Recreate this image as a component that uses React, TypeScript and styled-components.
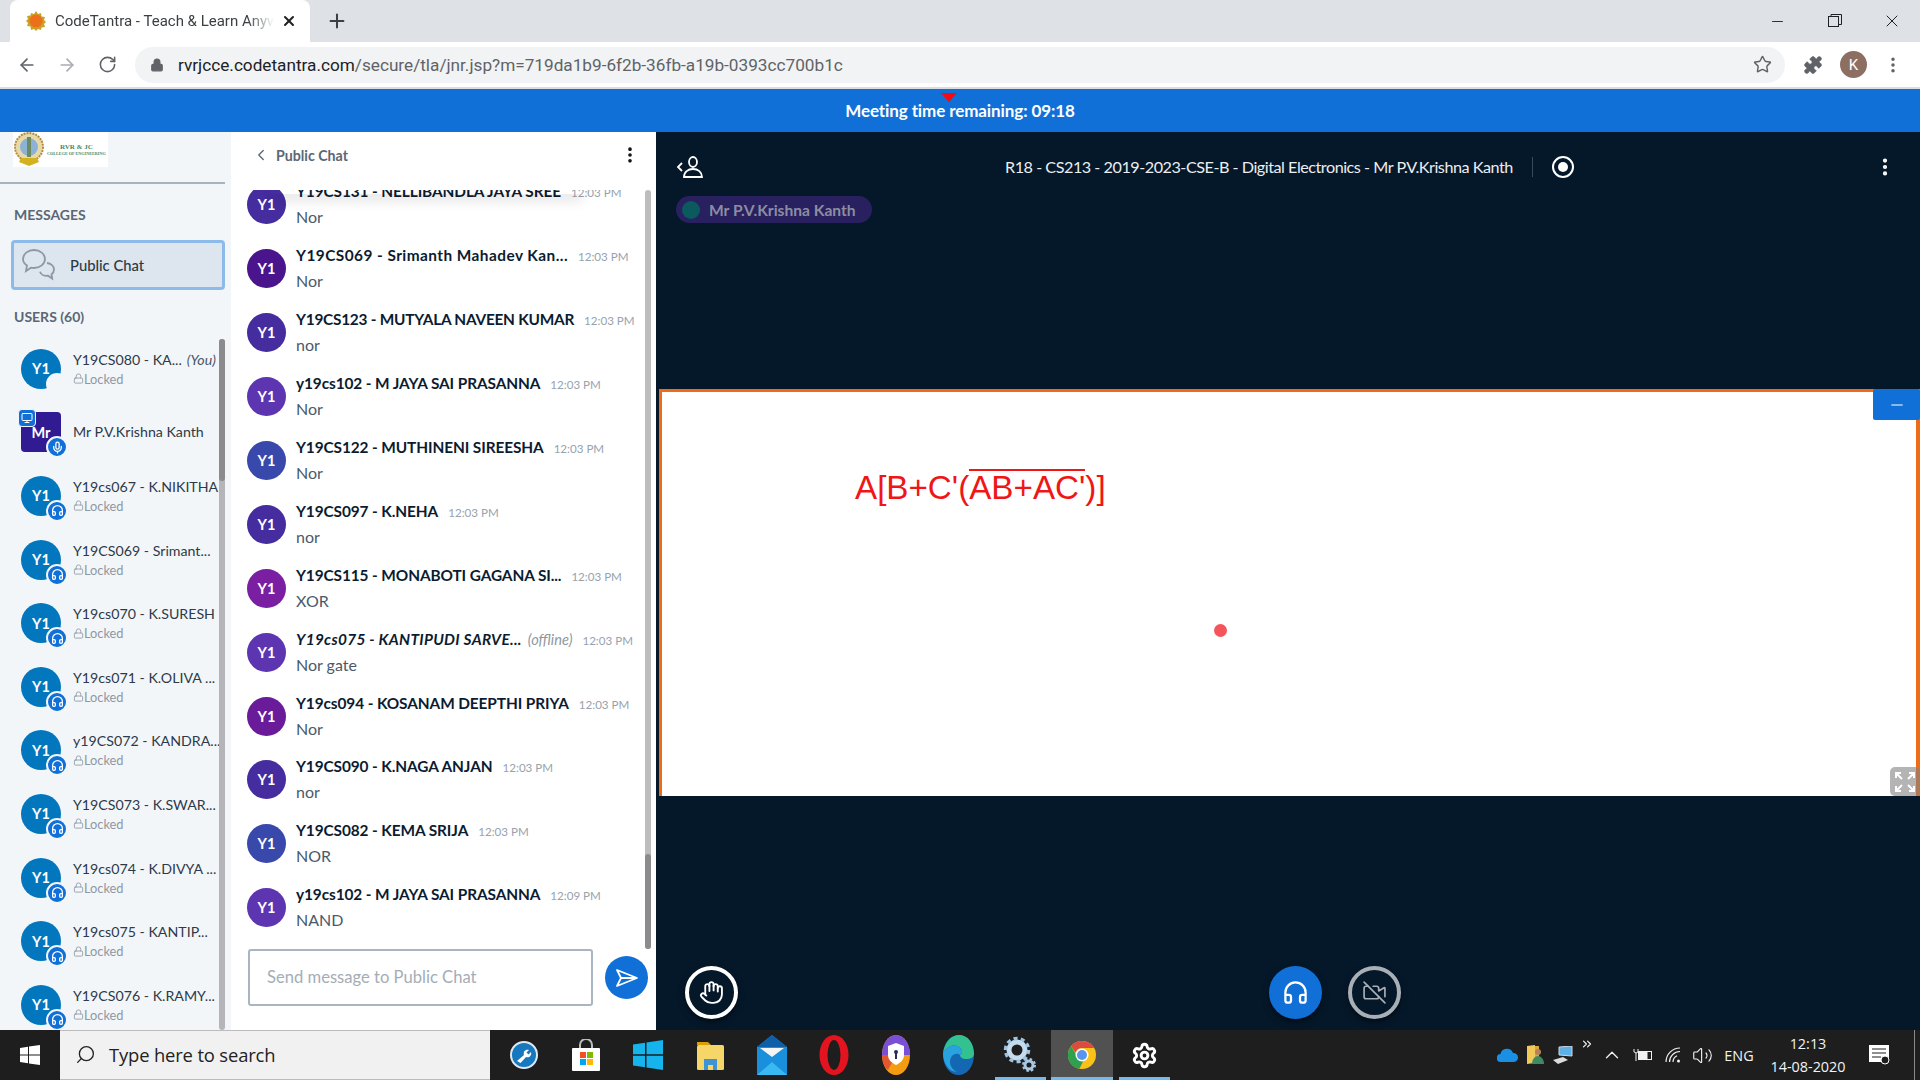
import React from "react";
import styled, { createGlobalStyle } from "styled-components";
import {
  ArrowLeft,
  ArrowRight,
  RotateCw,
  Lock,
  Star,
  Puzzle,
  Plus,
  X,
  Minus,
  ChevronLeft,
  ChevronUp,
  ChevronsRight,
  MoreVertical,
  Headphones,
  Mic,
  Monitor,
  Hand,
  VideoOff,
  Search,
  Volume2,
  Settings,
} from "lucide-react";

const SANS = `Lato, "Open Sans", sans-serif`;

const GlobalStyle = createGlobalStyle`
  html, body { margin: 0; padding: 0; height: 100%; overflow: hidden; }
  * { box-sizing: border-box; }
  body { font-family: ${SANS}; }
`;

const Page = styled.div`
  width: 1920px;
  height: 1080px;
  display: flex;
  flex-direction: column;
  overflow: hidden;
`;

/* browser chrome */
const TabStrip = styled.div`
  height: 42px;
  background: #dee1e6;
  display: flex;
  align-items: flex-end;
  padding-left: 10px;
  flex: none;
`;
const Tab = styled.div`
  width: 300px;
  height: 42px;
  background: #fff;
  border-radius: 8px 8px 0 0;
  display: flex;
  align-items: center;
  padding-left: 15px;
  position: relative;
`;
const TabTitle = styled.div`
  margin-left: 8px;
  width: 219px;
  font: 400 15px Roboto, sans-serif;
  color: #3c4043;
  white-space: nowrap;
  overflow: hidden;
  -webkit-mask-image: linear-gradient(90deg, #000 88%, transparent);
  mask-image: linear-gradient(90deg, #000 88%, transparent);
`;
const TabClose = styled.div`
  margin-left: 7px;
  display: flex;
  color: #202124;
`;
const NewTab = styled.div`
  height: 42px;
  margin-left: 16px;
  display: flex;
  align-items: center;
  color: #3c4043;
`;
const WindowButtons = styled.div`
  margin-left: auto;
  height: 42px;
  display: flex;
`;
const WindowButton = styled.div`
  width: 57px;
  height: 42px;
  display: flex;
  align-items: center;
  justify-content: center;
  color: #202124;
`;
const Toolbar = styled.div`
  height: 47px;
  flex: none;
  background: #fff;
  border-bottom: 2px solid #dadce0;
  display: flex;
  align-items: center;
`;
const NavButton = styled.div<{ $w: number; $dim?: boolean }>`
  width: ${(p) => p.$w}px;
  display: flex;
  justify-content: center;
  color: ${(p) => (p.$dim ? "#a9acb0" : "#5f6368")};
`;
const UrlPill = styled.div`
  width: 1650px;
  height: 36px;
  background: #f1f3f4;
  border-radius: 18px;
  display: flex;
  align-items: center;
  padding: 0 13px 0 15px;
  color: #5f6368;
`;
const UrlText = styled.div`
  margin-left: 14px;
  font: 400 17.2px Roboto, sans-serif;
  color: #5f6368;
  white-space: nowrap;
  flex: 1;
  b {
    font-weight: 400;
    color: #202124;
  }
`;
const ProfileDot = styled.div`
  width: 27px;
  height: 27px;
  border-radius: 50%;
  background: #8d6e63;
  color: #fff;
  font: 400 15px Roboto, sans-serif;
  display: flex;
  align-items: center;
  justify-content: center;
`;

/* meeting banner */
const Banner = styled.div`
  height: 43px;
  flex: none;
  background: #1070d8;
  color: #fff;
  font: 700 17px ${SANS};
  display: flex;
  align-items: center;
  justify-content: center;
  position: relative;
  letter-spacing: -0.1px;
  padding-bottom: 1px;
`;
const RedMark = styled.div`
  position: absolute;
  left: 941px;
  top: 4px;
  width: 0;
  height: 0;
  border-left: 8px solid transparent;
  border-right: 8px solid transparent;
  border-top: 9px solid #f40b12;
`;

const Main = styled.div`
  height: 898px;
  flex: none;
  display: grid;
  grid-template-columns: 231px 425px 1fr;
  overflow: hidden;
`;

/* left column */
const Sidebar = styled.aside`
  background: #f3f6f9;
  display: flex;
  flex-direction: column;
  overflow: hidden;
`;
const LogoBox = styled.div`
  margin-left: 13px;
  width: 95px;
  height: 35px;
  background: #fff;
  display: flex;
  align-items: center;
  flex: none;
  overflow: hidden;
`;
const LogoText = styled.div`
  font: 700 7px/8px "Liberation Serif", serif;
  color: #3d8a63;
  text-align: center;
  white-space: nowrap;
  margin-left: 2px;
  small {
    display: block;
    font-size: 4.2px;
    line-height: 6px;
  }
`;
const Divider = styled.div`
  height: 2px;
  width: 225px;
  margin-top: 15px;
  background: #a8b3bd;
  flex: none;
`;
const SectionLabel = styled.div<{ $top: number }>`
  margin: ${(p) => p.$top}px 0 0 14px;
  font: 700 14px ${SANS};
  color: #5a6775;
  height: 18px;
  line-height: 18px;
  flex: none;
`;
const PublicBox = styled.div`
  margin: 16px 0 0 11px;
  width: 214px;
  height: 50px;
  flex: none;
  background: #dde5ee;
  border: 3px solid #8dbbe9;
  border-radius: 4px;
  display: flex;
  align-items: center;
  padding-left: 7px;
  font: 500 14.8px ${SANS};
  color: #2b3947;
`;
const PublicLabel = styled.span`
  margin-left: 13px;
`;
const UserArea = styled.div`
  margin-top: 13px;
  flex: 1;
  display: flex;
  width: 225px;
  min-height: 0;
`;
const UserList = styled.div`
  flex: 1;
  min-width: 0;
  margin-top: -2px;
`;
const Scrollbar = styled.div<{ $thumbTop: number; $thumbHeight: number; $track: string }>`
  width: 6px;
  flex: none;
  border-radius: 3px;
  background: ${(p) => p.$track};
  position: relative;
  &::after {
    content: "";
    position: absolute;
    left: 0;
    right: 0;
    top: ${(p) => p.$thumbTop}px;
    height: ${(p) => p.$thumbHeight}px;
    background: #8b8b8d;
    border-radius: 3px;
  }
`;
const UserRow = styled.div`
  height: 63.6px;
  display: flex;
  align-items: center;
  padding-left: 21px;
`;
const UserAvatar = styled.div<{ $square?: boolean }>`
  width: 40px;
  height: 40px;
  flex: none;
  border-radius: ${(p) => (p.$square ? "4px" : "50%")};
  background: ${(p) => (p.$square ? "#311b92" : "#0277bd")};
  color: #fff;
  font: 700 14.5px ${SANS};
  display: flex;
  align-items: center;
  justify-content: center;
  position: relative;
`;
const Badge = styled.div<{ $cut?: boolean }>`
  position: absolute;
  right: -7px;
  bottom: -6px;
  width: 22px;
  height: 22px;
  border-radius: 50%;
  background: ${(p) => (p.$cut ? "#f3f6f9" : "#1070d8")};
  border: 2px solid #f3f6f9;
  color: #fff;
  display: flex;
  align-items: center;
  justify-content: center;
`;
const PresenterTag = styled.div`
  position: absolute;
  left: -3px;
  top: -3px;
  width: 18px;
  height: 18px;
  border-radius: 4px;
  background: #1070d8;
  border: 1px solid #f3f6f9;
  color: #fff;
  display: flex;
  align-items: center;
  justify-content: center;
`;
const UserText = styled.div`
  margin-left: 12px;
  min-width: 0;
  flex: 1;
`;
const UserName = styled.div`
  font: 400 14.2px/20px ${SANS};
  color: #2d3a49;
  white-space: nowrap;
  display: flex;
  i {
    margin-left: 5px;
    color: #4a5766;
  }
`;
const LockedLine = styled.div`
  font: 400 12.8px/18px ${SANS};
  color: #8e98a3;
  display: flex;
  align-items: center;
`;

/* chat column */
const ChatPanel = styled.section`
  background: #fff;
  display: flex;
  flex-direction: column;
  min-height: 0;
`;
const ChatHeader = styled.div`
  height: 58px;
  flex: none;
  display: flex;
  align-items: center;
  padding: 0 16px 12px 21px;
  color: #5a6775;
  font: 700 14.2px ${SANS};
`;
const ChatHeaderTitle = styled.span`
  margin-left: 6px;
  flex: 1;
`;
const ChatBody = styled.div`
  height: 759px;
  flex: none;
  display: flex;
  padding-right: 5px;
  position: relative;
  overflow: hidden;
`;
const TopShade = styled.div`
  position: absolute;
  left: 40px;
  top: -6px;
  right: 70px;
  height: 10px;
  background: transparent;
  box-shadow: 0 6px 14px -3px rgba(0, 0, 0, 0.3);
  z-index: 1;
`;
const MessageList = styled.div`
  flex: 1;
  min-width: 0;
  margin-top: -17px;
`;
const MessageRow = styled.div`
  height: 63.9px;
  display: flex;
  align-items: center;
  padding-left: 16px;
`;
const MessageAvatar = styled.div<{ $bg: string }>`
  width: 39px;
  height: 39px;
  flex: none;
  border-radius: 50%;
  background: ${(p) => p.$bg};
  color: #fff;
  font: 700 14.5px ${SANS};
  display: flex;
  align-items: center;
  justify-content: center;
`;
const MessageText = styled.div`
  margin-left: 10px;
  min-width: 0;
`;
const NameLine = styled.div`
  display: flex;
  align-items: baseline;
  white-space: nowrap;
  height: 25px;
  line-height: 25px;
`;
const SenderName = styled.span<{ $offline?: boolean; $track?: number }>`
  font: ${(p) => (p.$offline ? "italic" : "normal")} 700 15.4px/25px ${SANS};
  letter-spacing: ${(p) => p.$track ?? -0.1}px;
  color: #0c1c30;
`;
const OfflineTag = styled.span`
  margin-left: 6px;
  font: italic 400 14.6px/25px ${SANS};
  color: #8e98a3;
`;
const TimeStamp = styled.span`
  margin-left: 10px;
  font: 400 11.6px/25px ${SANS};
  color: #97a2ad;
`;
const MessageBody = styled.div`
  font: 400 16px/26px ${SANS};
  color: #4a5a6b;
`;
const ChatFooter = styled.div`
  flex: 1;
  display: flex;
  align-items: flex-start;
  padding-left: 17px;
`;
const ChatInput = styled.div`
  width: 345px;
  height: 57px;
  border: 2px solid #a9b5c1;
  border-radius: 3px;
  display: flex;
  align-items: center;
  padding: 0 0 2px 17px;
  font: 400 16.6px ${SANS};
  color: #a4adb7;
`;
const SendButton = styled.div`
  width: 43px;
  height: 43px;
  margin: 7px 0 0 12px;
  border-radius: 50%;
  background: #1070d8;
  display: flex;
  align-items: center;
  justify-content: center;
`;

/* presentation column */
const Stage = styled.section`
  background: #05182a;
  display: flex;
  flex-direction: column;
  min-height: 0;
  color: #fff;
`;
const StageHeader = styled.div`
  height: 22px;
  margin-top: 24px;
  flex: none;
  display: flex;
  align-items: center;
  padding-left: 20px;
`;
const MeetingTitle = styled.div`
  margin-left: 301px;
  padding-bottom: 2px;
  font: 400 16.2px ${SANS};
  color: #eceef0;
  white-space: nowrap;
  letter-spacing: -0.48px;
`;
const TitleSep = styled.div`
  width: 1px;
  height: 20px;
  margin-left: 19px;
  background: #39485a;
`;
const RecordIcon = styled.div`
  width: 22px;
  height: 22px;
  margin-left: 19px;
  border-radius: 50%;
  border: 2px solid #fff;
  display: flex;
  align-items: center;
  justify-content: center;
  &::after {
    content: "";
    width: 10px;
    height: 10px;
    border-radius: 50%;
    background: #fff;
  }
`;
const StageMenu = styled.div`
  margin-left: 300px;
  display: flex;
  color: #fff;
`;
const SpeakerChip = styled.div`
  align-self: flex-start;
  margin: 18px 0 0 20px;
  height: 27px;
  width: 196px;
  border-radius: 14px;
  background: #28205f;
  display: flex;
  align-items: center;
  padding-left: 6px;
  font: 700 15.6px ${SANS};
  color: #8d8da1;
  flex: none;
`;
const SpeakerDot = styled.div`
  width: 18px;
  height: 18px;
  border-radius: 50%;
  background: #0b5a5e;
  margin-right: 9px;
`;
const StageSpacer = styled.div`
  flex: 1;
`;
const Board = styled.div`
  height: 407px;
  flex: none;
  margin-left: 3px;
  background: #fff;
  border: solid #ee6c18;
  border-width: 3px 4px 0 3px;
  position: relative;
`;
const BoardFormula = styled.div`
  position: absolute;
  left: 193px;
  top: 76px;
  font: 400 33.2px/40px "Liberation Sans", sans-serif;
  color: #f01616;
  white-space: nowrap;
`;
const Overlined = styled.span`
  position: relative;
  &::before {
    content: "";
    position: absolute;
    left: 0;
    right: 0;
    top: 0;
    height: 2px;
    background: #f01616;
  }
`;
const Pointer = styled.div`
  position: absolute;
  left: 552px;
  top: 232px;
  width: 13px;
  height: 13px;
  border-radius: 50%;
  background: #f4555a;
`;
const MinimizeTab = styled.div`
  position: absolute;
  right: -4px;
  top: -3px;
  width: 47px;
  height: 31px;
  background: #1070d8;
  border-radius: 2px;
  display: flex;
  align-items: center;
  justify-content: center;
  color: #fff;
`;
const FullscreenTab = styled.div`
  position: absolute;
  right: -4px;
  bottom: 0;
  width: 30px;
  height: 29px;
  background: rgba(130, 130, 130, 0.6);
  border-radius: 5px;
  display: flex;
  align-items: center;
  justify-content: center;
`;
const Dock = styled.div`
  height: 234px;
  flex: none;
  display: flex;
  align-items: flex-start;
  padding: 170px 0 0 29px;
`;
const DockButton = styled.div<{ $kind: "hand" | "audio" | "video" }>`
  width: 53px;
  height: 53px;
  border-radius: 50%;
  display: flex;
  align-items: center;
  justify-content: center;
  box-shadow: 0 3px 6px rgba(0, 0, 0, 0.5);
  color: ${(p) => (p.$kind === "video" ? "#a9afb6" : "#fff")};
  background: ${(p) => (p.$kind === "audio" ? "#1070d8" : "transparent")};
  border: ${(p) => (p.$kind === "audio" ? "none" : `4px solid ${p.$kind === "video" ? "#a9afb6" : "#fff"}`)};
  margin-left: ${(p) => (p.$kind === "audio" ? "531px" : p.$kind === "video" ? "26px" : "0")};
`;

/* windows taskbar */
const Taskbar = styled.footer`
  height: 50px;
  flex: none;
  background: #1e1e1e;
  display: flex;
  align-items: stretch;
`;
const StartSlot = styled.div`
  width: 60px;
  display: flex;
  align-items: center;
  justify-content: center;
`;
const SearchBox = styled.div`
  width: 430px;
  background: #f1f1f1;
  border: 1px solid #bcbcbc;
  border-width: 1px 0;
  display: flex;
  align-items: center;
  padding: 0 0 2px 15px;
  color: #222;
  font: 400 18.4px "Open Sans", sans-serif;
  margin-right: 3px;
  svg {
    transform: scaleX(-1);
  }
`;
const SearchText = styled.span`
  margin-left: 13px;
  letter-spacing: -0.15px;
`;
const AppSlot = styled.div<{ $active?: boolean; $open?: boolean }>`
  width: 62px;
  display: flex;
  align-items: center;
  justify-content: center;
  position: relative;
  background: ${(p) => (p.$active ? "#515151" : "transparent")};
  &::after {
    content: "";
    display: ${(p) => (p.$open || p.$active ? "block" : "none")};
    position: absolute;
    bottom: 0;
    left: ${(p) => (p.$active ? "0" : "6px")};
    right: ${(p) => (p.$active ? "0" : "5px")};
    height: 3px;
    background: #76b9ed;
  }
`;
const TaskbarSpacer = styled.div`
  flex: 1;
`;
const TraySlot = styled.div<{ $w: number; $raised?: boolean }>`
  width: ${(p) => p.$w}px;
  display: flex;
  align-items: center;
  justify-content: center;
  color: #f2f2f2;
  padding-bottom: ${(p) => (p.$raised ? "22px" : "0")};
`;
const TrayLang = styled(TraySlot)`
  font: 400 14.4px "Open Sans", sans-serif;
`;
const Clock = styled(TraySlot)`
  flex-direction: column;
  font: 400 14.4px/23px "Open Sans", sans-serif;
  white-space: nowrap;
`;
const ShowDesktop = styled.div`
  width: 6px;
  margin-left: 10px;
  border-left: 1px solid #8a8a8a;
`;

type Message = { name: string; time: string; text: string; bg: string; offline?: boolean; track?: number };

const MESSAGES: Message[] = [
  { name: "Y19CS131 - NELLIBANDLA JAYA SREE", time: "12:03 PM", text: "Nor", bg: "#452c9f" },
  { name: "Y19CS069 - Srimanth Mahadev Kan...", time: "12:03 PM", text: "Nor", bg: "#4a148c", track: 0.45 },
  { name: "Y19CS123 - MUTYALA NAVEEN KUMAR", time: "12:03 PM", text: "nor", bg: "#452c9f", track: -0.25 },
  { name: "y19cs102 - M JAYA SAI PRASANNA", time: "12:03 PM", text: "Nor", bg: "#5e35b1" },
  { name: "Y19CS122 - MUTHINENI SIREESHA", time: "12:03 PM", text: "Nor", bg: "#3949ab" },
  { name: "Y19CS097 - K.NEHA", time: "12:03 PM", text: "nor", bg: "#452c9f" },
  { name: "Y19CS115 - MONABOTI GAGANA SI...", time: "12:03 PM", text: "XOR", bg: "#7b1fa2" },
  { name: "Y19cs075 - KANTIPUDI SARVE...", time: "12:03 PM", text: "Nor gate", bg: "#5e35b1", offline: true, track: 0.3 },
  { name: "Y19cs094 - KOSANAM DEEPTHI PRIYA", time: "12:03 PM", text: "Nor", bg: "#6a1b9a" },
  { name: "Y19CS090 - K.NAGA ANJAN", time: "12:03 PM", text: "nor", bg: "#452c9f" },
  { name: "Y19CS082 - KEMA SRIJA", time: "12:03 PM", text: "NOR", bg: "#3949ab" },
  { name: "y19cs102 - M JAYA SAI PRASANNA", time: "12:09 PM", text: "NAND", bg: "#5e35b1" },
];

const USERS = [
  "Y19cs067 - K.NIKITHA",
  "Y19CS069 - Srimant...",
  "Y19cs070 - K.SURESH",
  "Y19cs071 - K.OLIVA ...",
  "y19CS072 - KANDRA...",
  "Y19CS073 - K.SWAR...",
  "Y19cs074 - K.DIVYA ...",
  "Y19cs075 - KANTIP...",
  "Y19CS076 - K.RAMY...",
];

const Locked = () => (
  <LockedLine>
    <Lock size={11} strokeWidth={1.8} />
    Locked
  </LockedLine>
);

const Sun = () => (
  <svg width="22" height="22" viewBox="0 0 22 22">
    <path d="M11 1l2 3 3-1 .5 3.500 3.500.5-1 3 2 2-2 2 1 3-3.500.5L16 20l-3-1-2 2-2-2-3 1-.5-3.500L2 16l1-3-2-2 2-2-1-3 3.500-.5L6 3l3 1z" fill="#c9a227" />
    <circle cx="11" cy="11" r="6.500" fill="#ee6f1a" />
  </svg>
);

const Crest = () => (
  <svg width="32" height="35" viewBox="0 0 32 35">
    <circle cx="16" cy="15" r="14" fill="#e8d9a8" stroke="#b58b3c" strokeWidth="2" strokeDasharray="2 1" />
    <circle cx="16" cy="15" r="9" fill="#8cb3d6" />
    <rect x="14" y="5" width="4" height="20" fill="#6d8a62" />
    <path d="M6 30l10 4 10-4-2-4H8z" fill="#d4b21f" />
  </svg>
);

const ChatBubbles = () => (
  <svg width="36" height="34" viewBox="0 0 36 34" fill="none" stroke="#8b98a6" strokeWidth="1.8">
    <path d="M13 2c6 0 11 4 11 9s-5 9-11 9c-1 0-2 0-3-.3L5 23l1-5.500C3.500 16 2 13.700 2 11c0-5 5-9 11-9z" />
    <path d="M26 15c4 .5 7 3 7 6.500 0 2-1 3.600-2.500 4.700l.7 4.300-4.200-2.800c-3.500.5-7-1-8-4" />
  </svg>
);

const SendGlyph = () => (
  <svg width="24" height="20" viewBox="0 0 24 20" fill="none" stroke="#fff" strokeWidth="1.800" strokeLinejoin="round">
    <path d="M2 2l20 8-20 8 4-8zM6 10h16" />
  </svg>
);

const PersonBack = () => (
  <svg width="28" height="24" viewBox="0 0 28 24" fill="none" stroke="#fff" strokeWidth="1.800">
    <path d="M6 8l-4 4 4 4" />
    <ellipse cx="17" cy="7" rx="4" ry="5" />
    <path d="M8 22c0-5 4-8 9-8s9 3 9 8z" />
  </svg>
);

const ExpandArrows = () => (
  <svg width="20" height="20" viewBox="0 0 20 20" fill="none" stroke="#fff" strokeWidth="2">
    <path d="M1 6V1h5M1 1l6 6M14 1h5v5M19 1l-6 6M1 14v5h5M1 19l6-6M14 19h5v-5M19 19l-6-6" />
  </svg>
);

const WinLogo = ({ size, color }: { size: number; color: string }) => (
  <svg width={size} height={size} viewBox="0 0 20 20" fill={color}>
    <path d="M0 3l8-1.200V9.500H0zM9 1.600L20 0v9.500H9zM0 10.500h8v7.700L0 17zM9 10.500h11V20L9 18.400z" />
  </svg>
);

const ChromeLogo = () => (
  <svg width="28" height="28" viewBox="0 0 28 28">
    <circle cx="14" cy="14" r="14" fill="#fbc116" />
    <path d="M14 0a14 14 0 0 1 12.100 7H14a7 7 0 0 0-6.500 4.400L3.200 5A14 14 0 0 1 14 0z" fill="#db4b3e" />
    <path d="M3.200 5l6 10.500a6 6 0 0 0 6.300 4.300L11.400 27.800A14 14 0 0 1 3.200 5z" fill="#2fa04f" />
    <circle cx="14" cy="14" r="6.500" fill="#fff" />
    <circle cx="14" cy="14" r="5" fill="#5a95ed" />
  </svg>
);

const ToolsLogo = () => (
  <svg width="28" height="28" viewBox="0 0 28 28">
    <circle cx="14" cy="14" r="13" fill="#1679bf" stroke="#dfe9f2" strokeWidth="2" />
    <path d="M7 20l7-6c-1-3 1-6 5-5l-2.500 2.500 2 2L21 11c1 4-2 6-5 5l-5.500 6z" fill="#fff" />
  </svg>
);

const StoreLogo = () => (
  <svg width="30" height="32" viewBox="0 0 30 32">
    <path d="M9 9V6a6 6 0 0 1 12 0v3" fill="none" stroke="#bdbdbd" strokeWidth="2" />
    <rect x="1" y="9" width="28" height="23" rx="1" fill="#fff" />
    <rect x="9" y="13" width="6" height="6" fill="#f25022" />
    <rect x="16" y="13" width="6" height="6" fill="#7fba00" />
    <rect x="9" y="20" width="6" height="6" fill="#00a4ef" />
    <rect x="16" y="20" width="6" height="6" fill="#ffb900" />
  </svg>
);

const FolderLogo = () => (
  <svg width="29" height="32" viewBox="0 0 29 32">
    <path d="M1 3h11l3 3H1z" fill="#d9a005" />
    <rect x="1" y="6" width="27" height="25" rx="1.500" fill="#f7d669" />
    <path d="M8 31V20h13v11h-4v-5h-5v5z" fill="#3d93d6" />
  </svg>
);

const MailLogo = () => (
  <svg width="30" height="40" viewBox="0 0 30 40">
    <path d="M15 0l15 12v28H0V12z" fill="#1a8fdc" />
    <path d="M15 0l15 12H0z" fill="#0c5fa8" />
    <path d="M3 13h24l-12 9z" fill="#f4f4f4" />
    <path d="M0 40l15-13 15 13z" fill="#39b8f2" />
  </svg>
);

const OperaLogo = () => (
  <svg width="30" height="40" viewBox="0 0 30 40">
    <ellipse cx="15" cy="20" rx="14.500" ry="20" fill="#e3141f" />
    <ellipse cx="15" cy="20" rx="6.500" ry="15" fill="#1e1e1e" />
  </svg>
);

const AvastLogo = () => (
  <svg width="28" height="40" viewBox="0 0 28 40">
    <ellipse cx="14" cy="20" rx="14" ry="20" fill="#f39c12" />
    <path d="M14 0c8 0 14 9 14 20H0C0 9 6 0 14 0z" fill="#7a4fd6" />
    <path d="M0 20c0 6 2 12 6 15l8-15z" fill="#e4572e" />
    <path d="M14 8l8 3v9c0 5-4 8-8 10-4-2-8-5-8-10v-9z" fill="#fff" />
    <circle cx="14" cy="17" r="2" fill="#2c2c54" />
    <rect x="13" y="18" width="2" height="6" fill="#2c2c54" />
  </svg>
);

const EdgeLogo = () => (
  <svg width="31" height="40" viewBox="0 0 31 40">
    <ellipse cx="15.500" cy="20" rx="15.500" ry="20" fill="#1468b3" />
    <path d="M0 18C2 6 9 0 16 0c9 0 15 8 15 19 0 3-3 5-8 5-4 0-6-2-6-4 2-1 3-3 1-6C14 8 4 10 0 18z" fill="#33c28f" />
    <path d="M0 18c4-8 14-10 18-4 2 3 1 5-1 6-3-3-10-1-10 7 0 4 3 8 7 10C6 37 0 28 0 18z" fill="#2ba2e0" />
  </svg>
);

const GearsLogo = () => (
  <svg width="34" height="38" viewBox="0 0 34 38" fill="none">
    <circle cx="14" cy="14" r="8" stroke="#c4dcee" strokeWidth="5" />
    <circle cx="14" cy="14" r="11.500" stroke="#9fc4e0" strokeWidth="3.500" strokeDasharray="4 3.200" />
    <circle cx="26" cy="29" r="4" stroke="#a9c9e2" strokeWidth="3" />
    <circle cx="26" cy="29" r="6" stroke="#a9c9e2" strokeWidth="2" strokeDasharray="2.500 2.200" />
  </svg>
);

const OneDrive = () => (
  <svg width="22" height="14" viewBox="0 0 22 14">
    <path d="M4 14a4 4 0 0 1-.5-8A6.500 6.500 0 0 1 16 5a4.500 4.500 0 0 1 1 9z" fill="#1a8fe3" />
  </svg>
);

const FolderUser = () => (
  <svg width="18" height="20" viewBox="0 0 18 20">
    <path d="M0 1l8-1v18l-8 1z" fill="#f1c85a" />
    <rect x="8" y="1" width="4" height="16" fill="#d9a73a" />
    <circle cx="11" cy="7" r="3" fill="#b5835a" />
    <path d="M5 19c0-5 3-8 6-8s6 3 6 8z" fill="#3d8a63" />
  </svg>
);

const PcIcon = () => (
  <svg width="20" height="18" viewBox="0 0 20 18">
    <path d="M6 1l13-1v10L6 9z" fill="#5cb2e8" stroke="#cfd8dc" />
    <path d="M0 14l10-3 5 3-10 4z" fill="#dcdcdc" />
  </svg>
);

const BatteryIcon = () => (
  <svg width="20" height="14" viewBox="0 0 20 14" fill="none" stroke="#f2f2f2" strokeWidth="1">
    <path d="M1 1v3l2 1 2-1V1M3 5v8" />
    <rect x="5.500" y="3.500" width="13" height="8" />
    <rect x="6" y="4" width="8" height="7" fill="#f2f2f2" />
  </svg>
);

const WifiFan = () => (
  <svg width="16" height="16" viewBox="0 0 16 16" fill="none" stroke="#f2f2f2" strokeWidth="1.200">
    <path d="M1 15A14 14 0 0 1 15 1M4.500 15A10.500 10.500 0 0 1 15 4.500" />
    <path d="M8 15A7 7 0 0 1 12 8.800" />
    <circle cx="13.500" cy="14" r="1.500" fill="#f2f2f2" stroke="none" />
  </svg>
);

const NotificationGlyph = () => (
  <svg width="22" height="20" viewBox="0 0 22 20">
    <rect x="1" y="0" width="20" height="17" fill="#fff" />
    <path d="M4 4h14M4 8h14M4 12h9" stroke="#1e1e1e" strokeWidth="1" />
    <circle cx="17" cy="15" r="4" fill="#1e1e1e" stroke="#fff" strokeWidth="1" />
  </svg>
);

const RestoreIcon = () => (
  <svg width="14" height="14" viewBox="0 0 14 14" fill="none" stroke="#202124">
    <rect x="0.500" y="2.500" width="10" height="10" />
    <path d="M3 2.500V.500h10.500v10h-3" />
  </svg>
);

const UserRowItem = ({ name }: { name: string }) => (
  <UserRow>
    <UserAvatar>
      Y1
      <Badge>
        <Headphones size={13} strokeWidth={2.4} />
      </Badge>
    </UserAvatar>
    <UserText>
      <UserName>{name}</UserName>
      <Locked />
    </UserText>
  </UserRow>
);

const App = () => {
  return (
    <Page>
      <GlobalStyle />
      <TabStrip>
        <Tab>
          <Sun />
          <TabTitle>CodeTantra - Teach &amp; Learn Anywhere</TabTitle>
          <TabClose>
            <X size={16} strokeWidth={3} />
          </TabClose>
        </Tab>
        <NewTab>
          <Plus size={22} strokeWidth={2.2} />
        </NewTab>
        <WindowButtons>
          <WindowButton>
            <Minus size={17} strokeWidth={1.3} />
          </WindowButton>
          <WindowButton>
            <RestoreIcon />
          </WindowButton>
          <WindowButton>
            <X size={20} strokeWidth={1.2} />
          </WindowButton>
        </WindowButtons>
      </TabStrip>
      <Toolbar>
        <NavButton $w={54}>
          <ArrowLeft size={20} strokeWidth={2} />
        </NavButton>
        <NavButton $w={26} $dim>
          <ArrowRight size={20} strokeWidth={2} />
        </NavButton>
        <NavButton $w={55}>
          <RotateCw size={19} strokeWidth={2} />
        </NavButton>
        <UrlPill>
          <Lock size={14} fill="#5f6368" strokeWidth={2} />
          <UrlText>
            <b>rvrjcce.codetantra.com</b>/secure/tla/jnr.jsp?m=719da1b9-6f2b-36fb-a19b-0393cc700b1c
          </UrlText>
          <Star size={19} strokeWidth={1.8} />
        </UrlPill>
        <NavButton $w={55}>
          <Puzzle size={20} fill="#5f6368" strokeWidth={1} />
        </NavButton>
        <ProfileDot>K</ProfileDot>
        <NavButton $w={52}>
          <MoreVertical size={20} strokeWidth={2.2} />
        </NavButton>
      </Toolbar>
      <Banner>
        <RedMark />
        Meeting time remaining: 09:18
      </Banner>
      <Main>
        <Sidebar>
          <LogoBox>
            <Crest />
            <LogoText>
              RVR &amp; JC
              <small>COLLEGE OF ENGINEERING</small>
            </LogoText>
          </LogoBox>
          <Divider />
          <SectionLabel $top={22}>MESSAGES</SectionLabel>
          <PublicBox>
            <ChatBubbles />
            <PublicLabel>Public Chat</PublicLabel>
          </PublicBox>
          <SectionLabel $top={18}>USERS (60)</SectionLabel>
          <UserArea>
            <UserList>
              <UserRow>
                <UserAvatar>
                  Y1
                  <Badge $cut />
                </UserAvatar>
                <UserText>
                  <UserName>
                    Y19CS080 - KA...
                    <i>(You)</i>
                  </UserName>
                  <Locked />
                </UserText>
              </UserRow>
              <UserRow>
                <UserAvatar $square>
                  Mr
                  <PresenterTag>
                    <Monitor size={12} strokeWidth={2} />
                  </PresenterTag>
                  <Badge>
                    <Mic size={13} strokeWidth={2.4} />
                  </Badge>
                </UserAvatar>
                <UserText>
                  <UserName>Mr P.V.Krishna Kanth</UserName>
                </UserText>
              </UserRow>
              {USERS.map((name) => (
                <UserRowItem key={name} name={name} />
              ))}
            </UserList>
            <Scrollbar $track="#b5b5b9" $thumbTop={0} $thumbHeight={142} />
          </UserArea>
        </Sidebar>

        <ChatPanel>
          <ChatHeader>
            <ChevronLeft size={18} strokeWidth={1.8} />
            <ChatHeaderTitle>Public Chat</ChatHeaderTitle>
            <MoreVertical size={20} color="#111" strokeWidth={2.4} />
          </ChatHeader>
          <ChatBody>
            <TopShade />
            <MessageList>
              {MESSAGES.map((m) => (
                <MessageRow key={m.name + m.time}>
                  <MessageAvatar $bg={m.bg}>Y1</MessageAvatar>
                  <MessageText>
                    <NameLine>
                      <SenderName $offline={m.offline} $track={m.track}>
                        {m.name}
                      </SenderName>
                      {m.offline && <OfflineTag>(offline)</OfflineTag>}
                      <TimeStamp>{m.time}</TimeStamp>
                    </NameLine>
                    <MessageBody>{m.text}</MessageBody>
                  </MessageText>
                </MessageRow>
              ))}
            </MessageList>
            <Scrollbar $track="#bdbdbd" $thumbTop={664} $thumbHeight={95} />
          </ChatBody>
          <ChatFooter>
            <ChatInput>Send message to Public Chat</ChatInput>
            <SendButton>
              <SendGlyph />
            </SendButton>
          </ChatFooter>
        </ChatPanel>

        <Stage>
          <StageHeader>
            <PersonBack />
            <MeetingTitle>R18 - CS213 - 2019-2023-CSE-B - Digital Electronics - Mr P.V.Krishna Kanth</MeetingTitle>
            <TitleSep />
            <RecordIcon />
            <StageMenu>
              <MoreVertical size={22} strokeWidth={2.6} />
            </StageMenu>
          </StageHeader>
          <SpeakerChip>
            <SpeakerDot />
            Mr P.V.Krishna Kanth
          </SpeakerChip>
          <StageSpacer />
          <Board>
            <BoardFormula>
              A[B+C'(<Overlined>AB+AC'</Overlined>)]
            </BoardFormula>
            <Pointer />
            <MinimizeTab>
              <Minus size={18} strokeWidth={1.5} />
            </MinimizeTab>
            <FullscreenTab>
              <ExpandArrows />
            </FullscreenTab>
          </Board>
          <Dock>
            <DockButton $kind="hand">
              <Hand size={25} strokeWidth={1.8} />
            </DockButton>
            <DockButton $kind="audio">
              <Headphones size={27} strokeWidth={2} />
            </DockButton>
            <DockButton $kind="video">
              <VideoOff size={25} strokeWidth={1.6} />
            </DockButton>
          </Dock>
        </Stage>
      </Main>
      <Taskbar>
        <StartSlot>
          <WinLogo size={20} color="#fff" />
        </StartSlot>
        <SearchBox>
          <Search size={21} strokeWidth={1.5} />
          <SearchText>Type here to search</SearchText>
        </SearchBox>
        <AppSlot>
          <ToolsLogo />
        </AppSlot>
        <AppSlot>
          <StoreLogo />
        </AppSlot>
        <AppSlot>
          <WinLogo size={30} color="#15b4ec" />
        </AppSlot>
        <AppSlot>
          <FolderLogo />
        </AppSlot>
        <AppSlot>
          <MailLogo />
        </AppSlot>
        <AppSlot>
          <OperaLogo />
        </AppSlot>
        <AppSlot>
          <AvastLogo />
        </AppSlot>
        <AppSlot>
          <EdgeLogo />
        </AppSlot>
        <AppSlot $open>
          <GearsLogo />
        </AppSlot>
        <AppSlot $active>
          <ChromeLogo />
        </AppSlot>
        <AppSlot $open>
          <Settings size={27} color="#fff" strokeWidth={2.6} />
        </AppSlot>
        <TaskbarSpacer />
        <TraySlot $w={28}>
          <OneDrive />
        </TraySlot>
        <TraySlot $w={28}>
          <FolderUser />
        </TraySlot>
        <TraySlot $w={26}>
          <PcIcon />
        </TraySlot>
        <TraySlot $w={21} $raised>
          <ChevronsRight size={14} strokeWidth={2} />
        </TraySlot>
        <TraySlot $w={30}>
          <ChevronUp size={22} strokeWidth={1.4} />
        </TraySlot>
        <TraySlot $w={31}>
          <BatteryIcon />
        </TraySlot>
        <TraySlot $w={30}>
          <WifiFan />
        </TraySlot>
        <TraySlot $w={28}>
          <Volume2 size={21} strokeWidth={1.3} />
        </TraySlot>
        <TrayLang $w={46}>ENG</TrayLang>
        <Clock $w={92}>
          <span>12:13</span>
          <span>14-08-2020</span>
        </Clock>
        <TraySlot $w={50}>
          <NotificationGlyph />
        </TraySlot>
        <ShowDesktop />
      </Taskbar>
    </Page>
  );
};

export default App;
